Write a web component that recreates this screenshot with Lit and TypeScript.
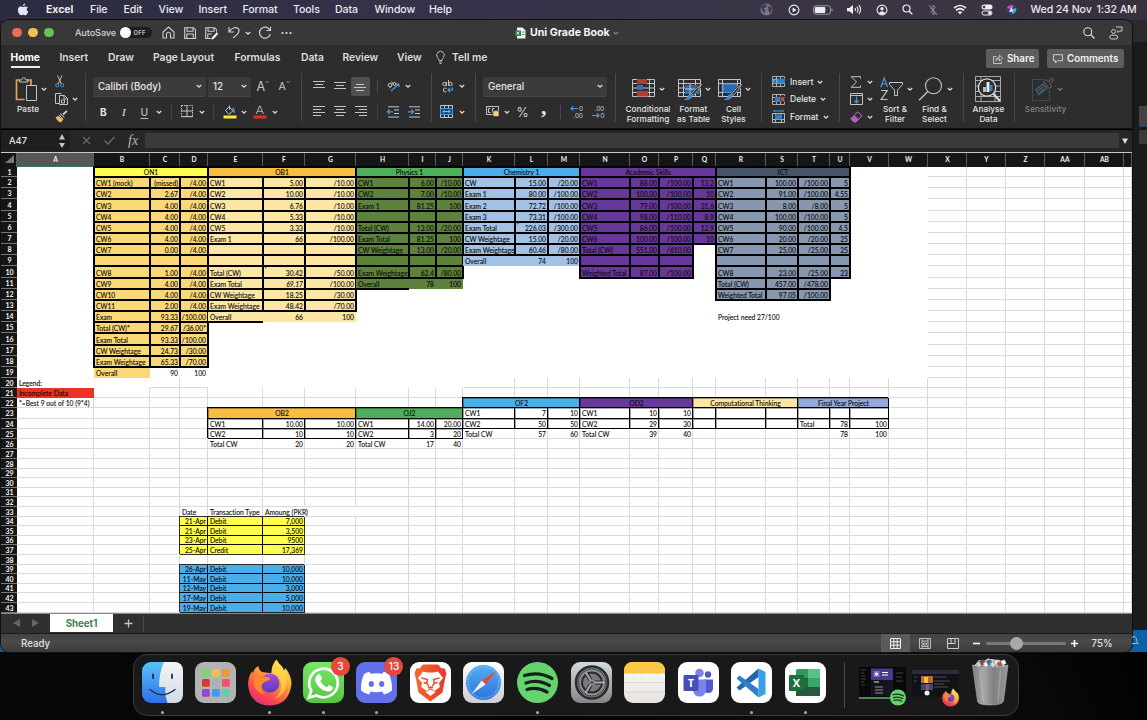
import { LitElement, html, svg, css, nothing } from "lit";
import { customElement } from "lit/decorators.js";

type Slot = [number, unknown];

const ic = (w: number, h: number, body: unknown) =>
  html`<svg class="ic" width=${w} height=${h} viewBox="0 0 ${w} ${h}" fill="none" stroke="#c4c4c4" stroke-width="1">${body}</svg>`;

/** Lays items out left to right; each slot reaches to the start of the next one. */
const strip = (origin: number, items: Slot[], cls = "") => html`<div class="strip ${cls}">
  <span class="slot" style="width:${items[0][0] - origin}px"></span>
  ${items.map(([x, t], i) =>
    i < items.length - 1
      ? html`<span class="slot" style="width:${items[i + 1][0] - x}px">${t}</span>`
      : html`<span class="slot">${t}</span>`)}
</div>`;

const chev = ic(6, 6, svg`<path d="M.8 2 3 4.2 5.2 2" stroke="#d8d8d8" stroke-width="1.3"/>`);
const vsep = html`<i class="vsep"></i>`;

const shared = css`
  * { box-sizing: border-box; }
  .strip { display: flex; align-items: center; flex: none; }
  .slot { flex: none; display: flex; align-items: center; white-space: nowrap; }
  .ic { display: block; flex: none; overflow: visible; }
  .vsep { width: 1px; height: 14px; background: #4a4a4a; }
`;

/* ---------- Menu bar ---------- */
@customElement("menu-bar")
export class MenuBar extends LitElement {
  static styles = [shared, css`
    :host { display: block; height: 20px; background: linear-gradient(90deg, #2b2c40, #36324a 40%, #3b3545 75%, #37303e); color: #e9e9ee; font: 500 10.6px Inter, sans-serif; letter-spacing: -.09px; }
    .strip { height: 19px; }
    b { font-weight: 700; }
  `];
  render() {
    const apple = ic(12, 13, svg`<path stroke="none" fill="#e6e6ec" d="M8.2.4C8.3 1.7 7.2 3 5.9 3 5.8 1.7 7 .5 8.2.4zM10.9 4.5C9.200 5.500 9.400 7.900 11.200 8.700 10.700 10.200 9.600 12.200 8.400 12.200 7.500 12.200 7.200 11.700 6.200 11.700 5.200 11.700 4.800 12.200 4 12.200 2.700 12.200.900 9.400.900 7 .900 4.800 2.300 3.500 3.800 3.500 4.800 3.500 5.500 4.100 6.200 4.100 6.900 4.100 7.700 3.400 8.800 3.400 9.600 3.400 10.400 3.800 10.900 4.500z"/>`);
    const globe = ic(13, 13, svg`<circle cx="6.500" cy="6.500" r="6" fill="#77758a" stroke="none"/><path d="M3 1.800 7 1.500 6 4.500 3.500 5 5.500 7.500 4.500 10 2 7 1 4zM8 3.500l3 0 1 3-2 4-1.500-3z" fill="#3d3a4c" stroke="none"/>`);
    const play = ic(12, 12, svg`<circle cx="6" cy="6" r="4.900" stroke="#eee" stroke-width="1.100"/><path d="M4.600 3.600v4.800L8.500 6z" fill="#eee" stroke="none"/>`);
    const batt = ic(20, 10, svg`<rect x=".500" y=".800" width="17" height="8.400" rx="2.300" stroke="#9a98a6"/><rect x="1.800" y="2" width="10.500" height="6" rx="1" fill="#eee" stroke="none"/><path d="M19 3.700v2.600" stroke="#9a98a6"/>`);
    const vol = ic(15, 11, svg`<path d="M0 4h2.300L6 1v9L2.300 7.300H0z" fill="#eee" stroke="none"/><path d="M8 4q1 1.500 0 3M10 2.700q2 2.800 0 5.800M12 1.200q3.200 4.300 0 8.700" stroke="#eee" stroke-width="1.100"/>`);
    const user = ic(12, 12, svg`<circle cx="6" cy="6" r="4.900" stroke="#eee" stroke-width="1.100"/><circle cx="6" cy="4.800" r="1.700" fill="#eee" stroke="none"/><path d="M2.800 9q3.200-3.400 6.400 0Q6 11.500 2.800 9z" fill="#eee" stroke="none"/>`);
    const find = ic(11, 11, svg`<circle cx="4.500" cy="4.500" r="3.500" stroke="#eee" stroke-width="1.200"/><path d="M7.200 7.200 10.300 10.300" stroke="#eee" stroke-width="1.400"/>`);
    const bt = ic(10, 12, svg`<path d="M2 3.500 7.500 8.500 5 11V1L7.500 3.500 2 8.500" stroke="#8d8999"/><path d="M1 1l8 10" stroke="#8d8999"/>`);
    const wifi = ic(14, 11, svg`<path d="M1 4.200q6-5.400 12 0M3 6.400q4-3.600 8 0" stroke="#eee" stroke-width="1.600"/><path d="M4.800 8q2.200-1.600 4.400 0L7 10.400z" fill="#eee" stroke="none"/>`);
    const cc = ic(12, 12, svg`<rect x=".500" y=".500" width="11" height="5" rx="2.500" fill="#eee" stroke="none"/><rect x="1" y="7" width="10" height="4" rx="2" stroke="#eee"/><circle cx="3" cy="3" r="1.300" fill="#3b3545" stroke="none"/><circle cx="8.700" cy="9" r="1.700" fill="#eee" stroke="none"/>`);
    const siri = ic(11, 11, svg`<circle cx="5.500" cy="5.500" r="5.200" fill="#33406e" stroke="none"/><path d="M.800 4Q3-.500 8 1.500L5.500 5.500z" fill="#c24fb0" stroke="none"/><path d="M5 5.500 10.300 4q0 5-4 6z" fill="#3fb6c9" stroke="none"/><path d="M3 8 5.500 3l1.500 4.500z" fill="#e8ecff" stroke="none"/>`);
    return strip(0, [[16.5, apple], [46, html`<b>Excel</b>`], [90, "File"], [123.5, "Edit"], [158.5, "View"], [198.5, "Insert"], [242.5, "Format"], [293, "Tools"], [335, "Data"], [374.5, "Window"], [429, "Help"],
      [760, globe], [787.5, play], [813, batt], [847, vol], [875.5, user], [901.5, find], [927.5, bt], [953, wifi], [981, cc], [1006, siri], [1030.5, "Wed 24 Nov"], [1096.5, "1:32 AM"]]);
  }
}

/* ---------- Title bar, tabs, ribbon, formula bar ---------- */
@customElement("excel-ribbon")
export class ExcelRibbon extends LitElement {
  static styles = [shared, css`
    :host { display: block; color: #e6e6e6; font: 500 10.3px Inter, sans-serif; }
    .title { height: 25px; background: #383838; }
    .light { width: 9.500px; height: 9.500px; border-radius: 50%; }
    .red { background: #ec6a5e; } .amber { background: #f5bf4f; } .green { background: #61c554; }
    .auto { font-size: 9.100px; letter-spacing: -.08px; color: #d6d6d6; }
    .toggle { display: flex; align-items: center; gap: 2.500px; width: 32px; height: 11px; border-radius: 6px; background: #1d1d1d; color: #bdbdbd; font-size: 5.800px; font-weight: 700; letter-spacing: .3px; }
    .toggle i { width: 11px; height: 11px; border-radius: 50%; background: #fff; }
    .doc { font-weight: 700; font-size: 10.600px; color: #f4f4f4; }
    .tabs { height: 26px; background: #2d2d2d; }
    .tabs .slot { height: 24px; }
    .tab { font-weight: 600; letter-spacing: -.02px; color: #dcdcdc; }
    .home { font-weight: 700; color: #fff; padding: 0 0 3px; border-bottom: 2px solid #eee; margin-top: 5px; letter-spacing: -.05px; }
    .btn { display: flex; align-items: center; gap: 4px; height: 19px; border-radius: 2px; background: #5d5d5d; padding: 0 5px 0 7px; font-weight: 600; font-size: 9.800px; color: #f2f2f2; margin-top: 3px; }
    .share { width: 53px; } .comments { width: 77px; gap: 4px; padding-left: 6px; }
    .ribbon { display: flex; height: 58px; background: #2d2d2d; padding-top: 2px; border-bottom: 1px solid #111; }
    .group { flex: none; height: 49px; border-right: 1px solid #484848; display: flex; }
    .g1 { width: 85px; } .g2 { width: 216px; } .g3 { width: 129.500px; } .g4 { width: 44.500px; } .g5 { width: 140px; }
    .g6 { width: 146px; } .g7 { width: 78px; } .g8 { width: 124px; } .g9 { width: 51px; } .g10 { border: 0; width: 100px; }
    .stack { display: flex; flex-direction: column; }
    .two .strip:first-child { height: 26px; }
    .two .strip:last-child { height: 25px; }
    .three .strip { height: 17.600px; }
    .box { display: flex; justify-content: space-between; align-items: center; height: 19px; background: #3b3b3b; border-radius: 2px; padding: 0 4px 0 5px; font-size: 9.700px; box-shadow: 0 1px 0 #474747; }
    .w113 { width: 113px; } .w43 { width: 43px; } .w124 { width: 124px; }
    .bold { font-weight: 700; font-size: 10px; } .ital { font: italic 11px "Liberation Serif", serif; } .und { text-decoration: underline; text-underline-offset: 2px; color: #bbb; }
    .grow { font-weight: 400; font-size: 12.500px; color: #c8c8c8; } .shrink { font-weight: 400; font-size: 10.500px; color: #c8c8c8; }
    .pct { font-weight: 300; font-size: 13px; } .comma { font: 700 22px/10px "Liberation Serif", serif; height: 19px; }
    .on { display: flex; align-items: center; justify-content: center; width: 19px; height: 19px; background: #505050; border-radius: 2px; }
    .tool { display: flex; flex-direction: column; flex: none; }
    .tool .strip { height: 32px; }
    .lbl { text-align: center; font-size: 8.200px; line-height: 9.800px; font-weight: 500; color: #e4e4e4; letter-spacing: .05px; white-space: nowrap; }
    .l1 { width: 54px; } .c1 { width: 55px; padding-left: 5px; } .lc { width: 54px; }
    .t2 { width: 45px; } .t3 { width: 35px; } .st { width: 44px; } .t8 { width: 35px; }
    .a9 { width: 49px; } .s10 { width: 61px; }
    .small { font-size: 8.500px; margin-right: 4px; }
    .dim { color: #848484; } .dimall { opacity: .45; }
    .fb { display: flex; align-items: center; height: 22px; background: #262626; border-top: 1px solid #000; font-size: 9.300px; }
    .name { width: 69px; height: 21px; background: #1f1f1f; display: flex; align-items: center; justify-content: space-between; padding: 0 5px 0 8px; }
    .fx { font: italic 14px "Liberation Serif", serif; color: #b5b5b5; }
    .input { width: 974px; height: 15px; background: #3a3a3a; }
  `];

  lines(ws: number[], y = 0) {
    return ic(13, 13, svg`${ws.map((w, i) => svg`<path d="M${(12 - w) / 2} ${y + i * 3 + 1.5}h${w}"/>`)}`);
  }
  side(ws: number[], right: boolean) {
    return ic(13, 13, svg`${ws.map((w, i) => svg`<path d="M${right ? 12 - w : 0} ${i * 3 + 1.5}h${w}"/>`)}`);
  }
  tableIcon(kind: string) {
    const base = svg`<path d="M.500 1.500h22v17h-22zM.500 5.500h22M.500 10h22M.500 14.500h22M5.500 1v18M17.500 1v18"/>`;
    if (kind === "cond") return ic(24, 22, svg`${base}<path d="M5 1h10v5.500H5zM5 13h11v5.500H5z" fill="#b43a38" stroke="none"/><path d="M5 7h6v5.500H5z" fill="#2f72b8" stroke="none"/><path d="M5 6.500h10M5 12.500h11" stroke="#2d2d2d"/>`);
    const fill = kind === "table" ? svg`<path d="M7 7h15v9H7z" fill="#2769b5" stroke="none"/><path d="M12 6v12M7 11h15"/>` : svg`<path d="M5 6h14v8.500H5z" fill="#2769b5" stroke="#4b91d5"/>`;
    return ic(24, 22, svg`${kind === "table" ? base : svg`<path d="M.500 1.500h22v17h-22zM.500 5.500h22M.500 14.500h22M4.500 1v18M19.500 1v18"/>`}${fill}<path d="M23 7 14 17" stroke="#2d2d2d" stroke-width="3.500"/><path d="M23.500 6.500Q18 10 13.500 16l1.800 1.500Q21 12 23.500 6.500z" fill="#2d2d2d" stroke="#ccc" stroke-width=".800"/><path d="M14.500 16.500q-3-1.500-4.500 1.500-.500 3-3.500 3.500 6.500 1.500 8-5z" fill="#3a86d2" stroke="#5aa0e4" stroke-width=".500"/>`);
  }
  cellIcon(kind: string) {
    const g = svg`<path d="M.500 1.500h12v10h-12zM.500 4.500h12M.500 8.500h12M4.500 1v11M8.500 1v11" stroke="#b8b8b8" stroke-width=".900"/>`;
    if (kind === "ins") return ic(13, 13, svg`${g}<path d="M5 3.500h8v5H5z" fill="#2f7dcc" stroke="none"/><path d="M7 6H1M3.500 3.500 1 6l2.500 2.500" stroke="#459ae8" stroke-width="1.200"/>`);
    if (kind === "del") return ic(13, 13, svg`${g}<path d="M3 4h5v5H3z" fill="#2f7dcc" stroke="none"/><path d="M8 3h5v6H8z" fill="#2d2d2d" stroke="none"/><path d="M8.500 4l4 4.500M12.500 4l-4 4.500" stroke="#e05656" stroke-width="1.200"/>`);
    return ic(13, 13, svg`<path d="M.500 3.500h12v9h-12zM.500 9.500h12M3.500 3v10M9.500 3v10" stroke="#b8b8b8"/><path d="M3 4.500h7v5H3z" fill="#2f7dcc" stroke="none"/><path d="M2 1h9M2 0v2M11 0v2" stroke="#459ae8"/>`);
  }
  render() {
    const o = 1;
    const home = ic(13, 13, svg`<path d="M1 6 6.500 1 12 6v6H8.500V8.300a2 2 0 0 0-4 0V12H1z" stroke="#ccc" stroke-width="1.100"/>`);
    const save = ic(12, 12, svg`<path d="M.700.700h8.800l2 2v8.800H.700zM3 .700v3.500h6V.700M2.800 11.500V7h6.500v4.500" stroke="#ccc" stroke-width="1.100"/>`);
    const savePen = ic(13, 12, svg`<path d="M6 11.500H.700V.700h8.800l2 2v2M3 .700v3.500h6V.700M2.800 11.500V7h4" stroke="#ccc" stroke-width="1.100"/><path d="M12 5 7 10.500l-.800 2 2.300-.500L13 7z" fill="#fff" stroke="none"/>`);
    const undo = ic(12, 13, svg`<path d="M1 1v5h5M1.200 5.800Q4 1.500 8 1.500q3 .500 3 3.500 0 2.500-6 7" stroke="#ccc" stroke-width="1.200"/>`);
    const redo = ic(14, 13, svg`<path d="M11.800 4A5.500 5.500 0 1 0 12.300 8M12.500.800V4.500H8.500" stroke="#ccc" stroke-width="1.200"/>`);
    const dots = ic(12, 4, svg`<g fill="#ddd" stroke="none"><circle cx="1.500" cy="2" r="1.100"/><circle cx="5.500" cy="2" r="1.100"/><circle cx="9.500" cy="2" r="1.100"/></g>`);
    const docIcon = ic(11, 12, svg`<path d="M2 .500h5.500L10.500 3.500V11.500H2z" fill="#f4f4f4" stroke="none"/><path d="M0 3.500h6v5.500H0z" fill="#1f8048" stroke="none"/><path d="M1.800 4.700l2.400 3M4.200 4.700l-2.400 3" stroke="#fff" stroke-width=".800"/><path d="M7 5h2.500M7 7.500h2.500" stroke="#3c9c62"/>`);
    const search = ic(12, 12, svg`<circle cx="4.800" cy="4.800" r="4" stroke="#ddd" stroke-width="1.100"/><path d="M7.800 7.800 11.500 11.500" stroke="#ddd" stroke-width="1.300"/>`);
    const person = ic(14, 14, svg`<circle cx="4.500" cy="5.500" r="2" stroke="#ccc"/><rect x=".700" y="9.200" width="8" height="3.800" rx="1.900" stroke="#ccc"/><path d="M7 1h6v4h-2.500L9 6.500V5H8" stroke="#ccc"/>`);
    const bulb = ic(9, 13, svg`<path d="M3 9.500Q2.800 7.800 1.500 6.500A3.800 3.800 0 1 1 7.500 6.500Q6.200 7.800 6 9.500zM3 11h3M3.500 12.500h2" stroke="#bbb"/>`);
    const shareIc = ic(10, 10, svg`<path d="M3.500 2.500H.500v7h8V7.500M2.800 6.500Q3 3.500 6.500 3.300V1.200L9.700 4.200 6.500 7V5Q4 5 2.800 6.500z" stroke="#ccc" stroke-width=".900"/>`);
    const bubble = ic(10, 10, svg`<path d="M.500.700h9v6h-5L2.500 9V6.700h-2z" stroke="#ccc"/>`);
    const paste = ic(23, 25, svg`<path d="M5 3H1.500v19.500h8" stroke="#e9a14a" stroke-width="1.700"/><path d="M12 3h4v5" stroke="#e9a14a" stroke-width="1.700"/><path d="M4.500 5V3h2.200q.300-2.300 2-2.300T10.800 3H13v2z" stroke="#c4c4c4"/><path d="M11.500 8.500h10v15h-10z" fill="#2d2d2d" stroke="#c4c4c4"/>`);
    const cut = ic(10, 13, svg`<path d="M2.500.500 6.500 9M7 .500 3 9" stroke="#c4c4c4"/><circle cx="2.300" cy="10.300" r="1.600" stroke="#4a9ae0"/><circle cx="7.200" cy="10.300" r="1.600" stroke="#4a9ae0"/>`);
    const copy = ic(13, 12, svg`<path d="M4 10.500H.500v-10h6" /><path d="M4.500 2.500h5l3 3v6h-8zM9 2.500v3.500h3.500M6.500 7h3v3h-3z"/>`);
    const brush = ic(13, 13, svg`<path d="M12 .800 8 4.500" stroke="#ccc" stroke-width="1.800"/><path d="M5 3.500l4.500 4M3.800 5l4.500 4" stroke="#ccc"/><path d="M3 5.800Q2 7 .500 7.500 3 12 6 12.500 7 11.500 8 9.500z" fill="#efb661" stroke="none"/>`);
    const borders = ic(13, 13, svg`<path d="M.500.500h11v11H.500z" stroke-dasharray="1.500 1"/><path d="M6 0v12M0 6h12M0 11.700h12"/>`);
    const fillIc = ic(14, 14, svg`<path d="M2.500 5.500 6 1.800l4 4-4 3.500zM6.500.500v4" /><path d="M9.500 3q2.500 2 1.500 5" stroke="#4a9ae0" stroke-width="1.400"/><path d="M.500 10.500h13v3H.500z" fill="#f7ee3a" stroke="none"/>`);
    const fontC = ic(14, 14, svg`<path d="M3.200 9 6.500 1h.600L10.400 9M4.500 6.300h4.600" stroke="#b8b8b8"/><path d="M.500 10.500h13v3H.500z" fill="#e0301f" stroke="none"/>`);
    const orient = ic(14, 13, svg`<path d="M4 11 12 4M12 4H9M12 4v3" stroke="#4a9ae0" stroke-width="1.200"/><circle cx="3" cy="5" r="1.800"/><path d="M4.500 6.500 2.500 8M7 5.200 4.500 1.500"/><circle cx="7.500" cy="4" r="1.500"/>`);
    const indent = (right: boolean) => ic(13, 12, svg`<path d="M1 .800h11M7 4h5M7 7.500h5M1 11h11"/><path d=${right ? "M0 5.800h5.500M3.300 3.500l2.200 2.300-2.200 2.300" : "M6 5.800H.500M2.800 3.500.500 5.800l2.300 2.300"} stroke="#4a9ae0" stroke-width="1.200"/>`);
    const wrap = ic(12, 13, svg`<circle cx="2.500" cy="4" r="1.700"/><path d="M4.500 2v4M6.500 0v6M4.500 8.500Q1.500 7 1.500 10t3 1.500"/><circle cx="8.500" cy="4" r="1.700"/><path d="M10.500 7.500v2.500H6M8 8l-2 2 2 2" stroke="#4a9ae0" stroke-width="1.200"/>`);
    const merge = ic(13, 13, svg`<path d="M.500.500h12v12H.500zM4.500.500v3M8.500.500v3M4.500 9.500v3M8.500 9.500v3"/><path d="M.500 3.500h12v6H.500z" fill="#1e4a76" stroke="#4a9ae0"/><path d="M3 6.500h7M4.500 5 3 6.500 4.500 8M8.500 5 10 6.500 8.500 8" stroke="#8cc4f5" stroke-width=".900"/>`);
    const money = ic(14, 13, svg`<path d="M.500 1.500h12v8H.500zM4.500 3.500h-2v4h2M8.500 3.500H6.500v4h2"/><path d="M7 6q3-1.500 6 0v5q-3 1.500-6 0z" fill="#e9bd5c" stroke="#2d2d2d" stroke-width=".600"/><path d="M7.500 8h5M7.500 10h5" stroke="#fff3cf" stroke-width=".700"/>`);
    const dec = (down: boolean) => html`<svg class="ic" width="14" height="14" viewBox="0 0 14 14" fill="#c8c8c8" font-family="Liberation Sans, sans-serif" font-size="7"><text x=${down ? 3.5 : 9} y="6">${down ? ".00" : "0"}</text><text x=${down ? 9.5 : 3} y="13">${down ? "0" : ".00"}</text><path d=${down ? "M1 10.500h7M5.800 8.300 8 10.500l-2.200 2.200" : "M8 3.500H1M3.200 1.300 1 3.500l2.200 2.200"} fill="none" stroke="#4a9ae0" stroke-width="1.200"/></svg>`;
    const sum = ic(12, 12, svg`<path d="M10.500 2.500V.700H1.200L6.500 6 1.200 11.300h9.300V9.500" />`);
    const fillDown = ic(13, 12, svg`<path d="M.500.500h12v11H.500zM.500 2.500h12"/><path d="M6.500 3.500v6M4 7.300l2.500 2.500L9 7.300" stroke="#4a9ae0" stroke-width="1.200"/>`);
    const erase = ic(13, 12, svg`<path d="M7.500.800 12 4.500 6 11H4L.800 8z" stroke="#c46bd0"/><path d="M4.300 4.300.800 8 4 11l1.800.200 3-3.300z" fill="#b45cc4" stroke="none"/>`);
    const sort = ic(23, 24, svg`<path d="M.800 10.300 4.200.900l3.400 9.400M2 7h4.500" stroke="#4a9ae0" stroke-width="1.200"/><path d="M1.200 13.500h6L1.200 22.500h6.300" stroke-width="1.200"/><path d="M9.500 5.500h13v2L17.500 13v5.500h-3V13L9.500 7.500z"/>`);
    const magn = ic(25, 24, svg`<circle cx="15.500" cy="8.800" r="8" stroke-width="1.100"/><path d="M9.800 14.500 1 23.300" stroke-width="1.300"/>`);
    const analyse = ic(26, 26, svg`<path d="M.500.500h25v25H.500zM.500 4.500h25M.500 10h25M.500 15.500h25M.500 20.500h25M6 .500v25M20 15v10" stroke="#a8a8a8"/><circle cx="12" cy="11.500" r="8.700" fill="#2d2d2d" stroke="#ddd" stroke-width="1.300"/><path d="M8 11h3v5H8z" fill="#bbb" stroke="none"/><path d="M11.500 6h3v10h-3z" fill="#e8e8e8" stroke="none"/><path d="M15 9h2.500v6H15z" fill="#2f7dcc" stroke="none"/><path d="M18.300 17.800 25 25" stroke="#ddd" stroke-width="2"/>`);
    const sens = ic(24, 26, svg`<path d="M12 3.500H1.500v21h17V14" stroke="#3d78a8" stroke-width="1.200"/><path d="M5 13.500 12 8l3.500 4.500L8 18.500zM7.500 14.500 12 11M9 16.500l4-3.500" stroke="#5f9cd0" stroke-width="1.500"/><path d="M12.500 5.500l2-2 3 2.500L20.500 1.500 22.500 4 19 8l1.500 3-2.500 1.500z" stroke="#aaa"/>`);
    return html`
      <div class="title strip">${strip(o, [[12, html`<i class="light red"></i>`], [28, html`<i class="light amber"></i>`], [44, html`<i class="light green"></i>`], [75, html`<span class="auto">AutoSave</span>`], [120, html`<span class="toggle"><i></i>OFF</span>`],
        [161.5, home], [183.500, save], [205, savePen], [227.500, undo], [245, chev], [258, redo], [281, dots], [515, docIcon], [530, html`<span class="doc">Uni Grade Book</span>`], [612.500, html`<span class="dimall">${chev}</span>`], [1083, search], [1109, person]])}</div>
      <div class="tabs">${strip(o, [[10.500, html`<span class="home">Home</span>`], [59.500, html`<span class="tab">Insert</span>`], [108, html`<span class="tab">Draw</span>`], [153, html`<span class="tab">Page Layout</span>`], [234.500, html`<span class="tab">Formulas</span>`], [301, html`<span class="tab">Data</span>`], [342.500, html`<span class="tab">Review</span>`], [397, html`<span class="tab">View</span>`], [436, bulb], [452, html`<span class="tab">Tell me</span>`],
        [986, html`<span class="btn share">${shareIc}Share</span>`], [1047, html`<span class="btn comments">${bubble}Comments</span>`]])}</div>
      <div class="ribbon">
        <div class="group g1">
          <div class="tool l1">${strip(o, [[15, paste], [40.500, chev]])}<div class="lbl">Paste</div></div>
          <div class="stack three">${strip(55, [[54, cut]])}${strip(55, [[52, copy], [69, chev]])}${strip(55, [[52.500, brush]])}</div>
        </div>
        <div class="group g2"><div class="stack two">
          ${strip(86, [[93, html`<span class="box w113">Calibri (Body)${chev}</span>`], [208, html`<span class="box w43">12${chev}</span>`], [256.500, html`<span class="grow">A</span>`], [265, ic(5, 12, svg`<path d="M.500 3 2.300 1 4 3" stroke="#4a9ae0"/>`)], [278.500, html`<span class="shrink">A</span>`], [285.500, ic(5, 12, svg`<path d="M.500 1 2.300 3 4 1" stroke="#4a9ae0"/>`)]])}
          ${strip(86, [[100, html`<span class="bold">B</span>`], [122, html`<span class="ital">I</span>`], [140.500, html`<span class="und">U</span>`], [156, chev], [171, vsep], [180.500, borders], [198.500, chev], [213, vsep], [222.500, fillIc], [241, chev], [253, fontC], [271.500, chev]])}
        </div></div>
        <div class="group g3"><div class="stack two">
          ${strip(302, [[313, this.lines([12, 8, 12])], [334, this.lines([12, 8, 12], 1)], [351, html`<span class="on">${this.lines([8, 12, 8], 3)}</span>`], [377, vsep], [387, orient], [405, chev]])}
          ${strip(302, [[313, this.side([12, 8, 12, 8], false)], [334, this.lines([12, 8, 12, 8])], [355, this.side([12, 8, 12, 8], true)], [377, vsep], [387, indent(false)], [408, indent(true)]])}
        </div></div>
        <div class="group g4"><div class="stack two">
          ${strip(431.5, [[442, wrap], [458.500, chev]])}
          ${strip(431.5, [[440, merge], [458.500, chev]])}
        </div></div>
        <div class="group g5"><div class="stack two">
          ${strip(476, [[483, html`<span class="box w124">General${chev}</span>`]])}
          ${strip(476, [[486, money], [504, chev], [516.500, html`<span class="pct">%</span>`], [541, html`<span class="comma">,</span>`], [560, vsep], [570, dec(false)], [591, dec(true)]])}
        </div></div>
        <div class="group g6">
          <div class="tool c1">${strip(621, [[632, this.tableIcon("cond")], [659, chev]])}<div class="lbl lc">Conditional<br>Formatting</div></div>
          <div class="tool t2">${strip(671, [[678, this.tableIcon("table")], [705, chev]])}<div class="lbl">Format<br>as Table</div></div>
          <div class="tool t3">${strip(716, [[718, this.tableIcon("cell")], [745, chev]])}<div class="lbl">Cell<br>Styles</div></div>
        </div>
        <div class="group g7"><div class="stack three">
          ${strip(762, [[772, this.cellIcon("ins")], [790, html`<span class="small">Insert</span>${chev}`]])}
          ${strip(762, [[772, this.cellIcon("del")], [790, html`<span class="small">Delete</span>${chev}`]])}
          ${strip(762, [[772, this.cellIcon("fmt")], [790, html`<span class="small">Format</span>${chev}`]])}
        </div></div>
        <div class="group g8">
          <div class="stack three">${strip(840, [[850, sum], [867, chev]])}${strip(840, [[850, fillDown], [867, chev]])}${strip(840, [[850, erase], [867, chev]])}</div>
          <div class="tool st">${strip(873, [[880, sort], [907, chev]])}<div class="lbl">Sort &amp;<br>Filter</div></div>
          <div class="tool t8">${strip(917, [[918, magn], [947, chev]])}<div class="lbl">Find &amp;<br>Select</div></div>
        </div>
        <div class="group g9"><div class="tool a9">${strip(964, [[975, analyse]])}<div class="lbl">Analyse<br>Data</div></div></div>
        <div class="group g10"><div class="tool s10"><span class="dimall">${strip(1015, [[1031, sens], [1057, chev]])}</span><div class="lbl dim">Sensitivity</div></div></div>
      </div>
      <div class="fb"><span class="name">A47${ic(6, 14, svg`<path d="M0 5.500 3 0l3 5.500zM0 9h6l-3 5z" fill="#c4c4c4" stroke="none"/>`)}</span>
        ${strip(70, [[81.500, ic(9, 9, svg`<path d="M1 1l7 7M8 1 1 8" stroke="#666" stroke-width="1.300"/>`)], [104, ic(11, 9, svg`<path d="M.500 4.500 4 8 10.500 1" stroke="#666" stroke-width="1.500"/>`)], [128, html`<span class="fx">fx</span>`], [145, html`<span class="input"></span>`], [1122, ic(6, 6, svg`<path d="M0 .500h6L3 6z" fill="#ddd" stroke="none"/>`)]])}
      </div>`;
  }
}

/* ---------- Worksheet ---------- */
const COLS = ["A","B","C","D","E","F","G","H","I","J","K","L","M","N","O","P","Q","R","S","T","U","V","W","X","Y","Z","AA","AB",""];
const COL_X = [1,17,94,150,180,208,263,305,356,409,436,463,515,548,580,630,659,693,716,766,798,830,850,889,928,967,1006,1045,1085,1124,1132];
const ROW_Y = [153, 167, ...Array.from({ length: 19 }, (_, i) => Math.round(177 + i * 11.17)), 388, 398, 408, 419, 429, 439,
  ...Array.from({ length: 18 }, (_, i) => Math.round(449.3 + i * 9.6))];
const tracks = (e: number[]) => e.slice(1).map((v, i) => `${v - e[i]}px`).join(" ");

interface Block { c: string; r: number; span: number; title?: string; head?: string; fill?: string; edge: string; rows: string[][]; tail?: string[]; tailFill?: number; }
const BLOCKS: Block[] = [
  { c: "B", r: 1, span: 3, title: "ON1", head: "#fffd50", fill: "#fbd876", edge: "thick", tailFill: 1, tail: ["Overall", "90", "100"],
    rows: [["CW1 (mock)","(missed)","/4.00"],["CW2","2.67","/4.00"],["CW3","4.00","/4.00"],["CW4","4.00","/4.00"],["CW5","4.00","/4.00"],["CW6","4.00","/4.00"],["CW7","0.00","/4.00"],["","",""],["CW8","1.00","/4.00"],["CW9","4.00","/4.00"],["CW10","4.00","/4.00"],["CW11","2.00","/4.00"],["Exam","93.33","/100.00"],["Total (CW)*","29.67","/36.00*"],["Exam Total","93.33","/100.00"],["CW Weightage","24.73","/30.00"],["Exam Weightage","65.33","/70.00"]] },
  { c: "E", r: 1, span: 3, title: "OB1", head: "#f6bd40", fill: "#fde5a3", edge: "thick", tailFill: 3, tail: ["Overall", "66", "100"],
    rows: [["CW1","5.00","/10.00"],["CW2","10.00","/10.00"],["CW3","6.76","/10.00"],["CW4","5.33","/10.00"],["CW5","3.33","/10.00"],["Exam 1","66","/100.00"],["","",""],["","",""],["Total (CW)","30.42","/50.00"],["Exam Total","69.17","/100.00"],["CW Weightage","18.25","/30.00"],["Exam Weightage","48.42","/70.00"]] },
  { c: "H", r: 1, span: 3, title: "Physics 1", head: "#4eae5b", fill: "#5d823c", edge: "thick", tailFill: 3, tail: ["Overall", "78", "100"],
    rows: [["CW1","6.00","/10.00"],["CW2","7.00","/10.00"],["Exam 1","81.25","100"],["","",""],["Total (CW)","13.00","/20.00"],["Exam Total","81.25","100"],["CW Weightage","13.00","/20.00"],["","",""],["Exam Weightage","62.4","/80.00"]] },
  { c: "K", r: 1, span: 3, title: "Chemistry 1", head: "#4baeea", fill: "#a3c1e5", edge: "thick", tailFill: 3, tail: ["Overall", "74", "100"],
    rows: [["CW","15.00","/20.00"],["Exam 1","80.00","/100.00"],["Exam 2","72.72","/100.00"],["Exam 3","73.31","/100.00"],["Exam Total","226.03","/300.00"],["CW Weightage","15.00","/20.00"],["Exam Weightage","60.46","/80.00"]] },
  { c: "N", r: 1, span: 4, title: "Academic Skills", head: "#68379a", fill: "#68379a", edge: "thick",
    rows: [["CW1","88.00","/100.00","13.2"],["CW2","100.00","/100.00","10"],["CW3","79.00","/100.00","31.6"],["CW4","98.00","/110.00","8.9"],["CW5","86.00","/100.00","12.9"],["CW6","100.00","/100.00","10"],["Total (CW)","551.00","/610.00"],["","",""],["Weighted Total","87.00","/100.00"]] },
  { c: "R", r: 1, span: 4, title: "ICT", head: "#475468", fill: "#8797af", edge: "thick",
    rows: [["CW1","100.00","/100.00","5"],["CW2","91.00","/100.00","4.55"],["CW3","8.00","/8.00","5"],["CW4","100.00","/100.00","5"],["CW5","90.00","/100.00","4.5"],["CW6","20.00","/20.00","25"],["CW7","25.00","/25.00","25"],["","","",""],["CW8","23.00","/25.00","23"],["Total (CW)","457.00","/478.00"],["Weighted Total","97.05","/100.00"]] },
  { c: "E", r: 23, span: 3, title: "OB2", head: "#f6bd40", fill: "#fff", edge: "medium", rows: [["CW1","10.00","10.00"],["CW2","10","10"]], tail: ["Total CW","20","20"] },
  { c: "H", r: 23, span: 3, title: "OJ2", head: "#4eae5b", fill: "#fff", edge: "medium", rows: [["CW1","14.00","20.00"],["CW2","3","20"]], tail: ["Total CW","17","40"] },
  { c: "K", r: 22, span: 3, title: "OF2", head: "#4baeea", fill: "#fff", edge: "medium", rows: [["CW1","7","10"],["CW2","50","50"]], tail: ["Total CW","57","60"] },
  { c: "N", r: 22, span: 3, title: "OD2", head: "#68379a", fill: "#fff", edge: "medium", rows: [["CW1","10","10"],["CW2","29","30"]], tail: ["Total CW","39","40"] },
  { c: "Q", r: 22, span: 3, title: "Computational Thinking", head: "#fde5a3", fill: "#fff", edge: "medium", rows: [["","",""],["","",""]] },
  { c: "T", r: 22, span: 3, title: "Final Year Project", head: "#92a9d9", fill: "#fff", edge: "medium", rows: [["","",""],["Total","78","100"]], tail: ["","78","100"] },
  { c: "D", r: 33, span: 3, fill: "#fffd50", edge: "thin", rows: [["21-Apr","Debit","7,000"],["21-Apr","Debit","3,500"],["23-Apr","Debit","9500"],["25-Apr","Credit","17,369"]] },
  { c: "D", r: 38, span: 3, fill: "#4baeea", edge: "thin", rows: [["26-Apr","Debit","10,000"],["11-May","Debit","10,000"],["12-May","Debit","3,000"],["17-May","Debit","5,000"],["19-May","Debit","10,000"]] },
];

@customElement("work-sheet")
export class WorkSheet extends LitElement {
  static styles = css`
    * { box-sizing: border-box; }
    :host { display: block; background: #fff; color: #0c0c0c; font: 400 6.700px/8px Lato, sans-serif; }
    .grid { display: grid; height: 460px; overflow: hidden; }
    .hd { background: #161616; color: #f2f2f2; font-weight: 700; font-size: 6.700px; display: flex; align-items: center; justify-content: center; border-right: 1px solid #5c5c5c; padding: 0 0 2px 1px; }
    .rh { border-right: 0; border-bottom: 1px solid #777; padding: 0 0 0 1px; font-size: 7px; }
    .sel { background: #565656; border-bottom: 1px solid #2f7a4d; padding: 0 0 1px 1px; }
    .vl { border-right: 1px solid #dadada; }
    .hl { border-bottom: 1px solid #dadada; }
    .white { background: #fff; }
    .kr { margin-bottom: 1px; }
    .cell { display: flex; align-items: center; white-space: nowrap; padding: 0 2px 1px; min-width: 0; letter-spacing: .02px; -webkit-text-stroke: .1px #0c0c0c; }
    .low { padding: 1px 2px 0; }
    .right { justify-content: flex-end; }
    .mid { justify-content: center; }
    .thick { outline: 2px solid #000; outline-offset: -1px; }
    .medium { box-shadow: inset -1px -1px #000, -1px -1px #000, inset 1px 1px rgba(0,0,0,.35); }
    .thin { box-shadow: inset -1px -1px rgba(0,0,0,.8), -1px -1px rgba(0,0,0,.8); }
    .italic { font-style: italic; }
    .flag::before { content: ""; align-self: flex-start; margin-right: auto; border: solid transparent; border-width: 0 2.500px 2.500px 0; border-left: 0; border-top: 2.500px solid #1f7a3c; }
    .under { border-bottom: 2px solid #000; margin-bottom: -1px; }
  `;
  at(c: number, r: number, cs = 1, rs = 1) { return `grid-area:${r + 1}/${c + 2}/span ${rs}/span ${cs}`; }
  cell(text: string, c: number, r: number, cls: string, bg?: string, span = 1) {
    const right = /^[\d/(]/.test(text) && span === 1;
    const low = r > 1 && r < 20;
    const flag = text === "30.42" || text === "226.03";
    return html`<div class="cell ${low ? "low" : ""} ${cls} ${right ? "right" : ""} ${flag ? "flag" : ""} ${text === "69.17" ? "italic" : ""}" style="${this.at(c, r, span)}${bg ? `;background:${bg}` : ""}">${text}</div>`;
  }
  block(b: Block) {
    const c0 = COLS.indexOf(b.c);
    const t = b.r + b.rows.length + 1;
    const ul = b.title === "OB1" || b.title === "Physics 1";
    return html`
      ${b.tail ? b.tail.map((v, j) => this.cell(v, c0 + j, t, ul && j === 0 ? "under" : "", j < (b.tailFill ?? 0) ? b.fill : undefined)) : nothing}
      ${b.title ? this.cell(b.title, c0, b.r, `${b.edge} mid`, b.head, b.span) : nothing}
      ${b.rows.map((row, i) => row.map((v, j) => this.cell(v, c0 + j, b.r + 1 + i, b.edge, b.fill)))}`;
  }
  render() {
    return html`<div class="grid" style="grid-template-columns:${tracks(COL_X)};grid-template-rows:${tracks(ROW_Y)}">
      ${COLS.map((_, c) => html`<i class="vl" style=${this.at(c, 1, 1, 43)}></i>`)}
      ${Array.from({ length: 43 }, (_, r) => html`<i class="hl" style=${this.at(0, r + 1, 29)}></i>`)}
      <i class="white" style=${this.at(0, 1, 23, 19)}></i>
      <i class="white" style=${this.at(0, 20, 2)}></i>
      <i class="white kr" style=${this.at(3, 20)}></i>
      <i class="white" style=${this.at(4, 20, 6)}></i>
      <i class="white kr" style=${this.at(5, 33, 2)}></i>
      <div class="hd" style="grid-area:1/1"><svg width="9" height="8"><path d="M9 0v8H0z" fill="#777"/></svg></div>
      ${COLS.map((n, c) => html`<div class="hd ${c === 0 ? "sel" : ""}" style=${this.at(c, 0)}>${n}</div>`)}
      ${Array.from({ length: 43 }, (_, r) => html`<div class="hd rh" style="grid-area:${r + 2}/1">${r + 1}</div>`)}
      ${BLOCKS.map((b) => this.block(b))}
      ${this.cell("Project need 27/100", 17, 14, "")}
      ${this.cell("Legend:", 0, 20, "")}
      ${this.cell("Incomplete Data", 0, 21, "", "#ea3323")}
      ${this.cell("*=Best 9 out of 10 (9*4)", 0, 22, "")}
      ${this.cell("Date", 3, 33, "")}
      ${this.cell("Transaction Type", 4, 33, "")}
      ${this.cell("Amoung (PKR)", 5, 33, "")}
    </div>`;
  }
}

/* ---------- Sheet tabs and status bar ---------- */
@customElement("excel-footer")
export class ExcelFooter extends LitElement {
  static styles = [shared, css`
    :host { display: block; font: 500 9.700px Inter, sans-serif; color: #e0e0e0; }
    .tabs { height: 21px; background: #303030; border-bottom: 1px solid #1c1c1c; border-top: 1px solid #8a8a8a; }
    .tabs > .strip { height: 18px; }
    .sheet { width: 63px; height: 18px; background: #fff; color: #3c8155; font-weight: 700; display: flex; align-items: center; justify-content: center; }
    .status { height: 18px; background: linear-gradient(#424242, #4a4a4a 40%, #3b3b3b); }
    .status > .strip { height: 18px; }
    .view { width: 29px; height: 18px; background: #5b5b5b; display: flex; align-items: center; justify-content: center; }
    .vsep { height: 17px; }
    .slider { width: 80px; height: 3px; border-radius: 2px; background: #777; display: flex; align-items: center; padding-left: 24px; }
    .knob { width: 13px; height: 13px; border-radius: 50%; background: #a9a9a9; flex: none; }
  `];
  render() {
    const tri = (d: string) => ic(7, 8, svg`<path d=${d} fill="#656565" stroke="none"/>`);
    return html`<div class="tabs">${strip(1, [[13, tri("M7 0v8L0 4z")], [32, tri("M0 0v8l7-4z")], [50, html`<span class="sheet">Sheet1</span>`], [124, ic(9, 9, svg`<path d="M4.500.500v8M.500 4.500h8" stroke="#c4c4c4" stroke-width="1.300"/>`)], [143, vsep]])}</div>
      <div class="status">${strip(1, [[21, "Ready"],
        [881, html`<span class="view">${ic(11, 11, svg`<path d="M.500.500h10v10H.500zM3.800 0v11M7.200 0v11M0 3.800h11M0 7.200h11" stroke="#eee"/>`)}</span>`],
        [918.500, ic(12, 11, svg`<path d="M.500.500h11v10H.500zM3 3h6v5.500H3zM4.500 5h3v2h-3zM3 0v3M9 0v3M3 8v3M9 8v3" stroke="#ccc" stroke-width=".900"/>`)],
        [947, ic(12, 11, svg`<path d="M.500.500h11v10H.500zM4 .500v5M8 .500v5M.500 5.500h7.500" stroke="#ccc"/>`)],
        [973, ic(7, 7, svg`<path d="M0 3.500h7" stroke="#fff" stroke-width="1.600"/>`)], [985.500, html`<span class="slider"><i class="knob"></i></span>`], [1070.500, ic(7, 7, svg`<path d="M0 3.500h7M3.500 0v7" stroke="#fff" stroke-width="1.600"/>`)], [1091.500, "75%"]])}</div>`;
  }
}

/* ---------- Dock ---------- */
const flame = svg`<path d="M27.500-2.500Q29 1 32.500 4 34.500 6 35 9L36.500 6Q42.500 14 42.500 22 40 43 21 43.500 1 43-1 23-1 14 3.500 9L4 11.500Q5 6 9.500 4q.300 4 3.500 6 6 1 9.500 1Q22.500 3 27.500-2.500z" fill="url(#ff)" stroke="none"/><path d="M27.500-2.500Q29 1 32.500 4q6 7 5 17-1 12-12 16 8-7 6.500-16-1.500-6-9.500-10Q22.500 3 27.500-2.500z" fill="#ffe14d" opacity=".600" stroke="none"/><circle cx="21" cy="21" r="9.500" fill="url(#fp)" stroke="none"/><path d="M5 16Q9 13 14 14.500l4 .500Q22 15 21 17.500q-5 1.500-8 4.500-2 8 4 10-10 0-12-10z" fill="#fd8a2f" stroke="none"/>`;
const spot = (bars: string) => svg`<circle cx="20.500" cy="20.500" r="20.500" fill="#65d46e" stroke="none"/><path d="M7.500 13.500Q22 9 35 16.500M9 21Q21 17 32.500 23.500M10 27.500Q20 24.500 30 30" stroke=${bars} stroke-width="3.200" stroke-linecap="round"/>`;

@customElement("mac-dock")
export class MacDock extends LitElement {
  static styles = [shared, css`
    :host { display: flex; width: 886px; height: 62px; margin: 2px 0 0 133px; background: #191919; border: 1px solid #3a3a3a; border-radius: 14px; padding-left: 1.500px; }
    .app { position: relative; width: 53.600px; height: 60px; display: flex; flex-direction: column; align-items: center; padding-top: 7px; flex: none; }
    .dot { width: 3px; height: 3px; border-radius: 50%; background: #aaa; margin-top: 8px; }
    .badge { position: absolute; right: 0; top: 2px; width: 19px; height: 19px; border-radius: 50%; background: #e5483d; color: #fff; font: 500 10px/19px Inter, sans-serif; text-align: center; }
    .tray { display: flex; align-items: flex-start; }
    .rule { width: 1px; height: 46px; margin: 7px 14px 0 11.500px; background: #4b4b4b; }
    .trash { margin: 3px 0 0 7px; }
    .thumb { margin-top: 12px; margin-right: 6px; }
  `];
  app(body: unknown, running = false, badge?: string) {
    return html`<div class="app">${ic(41, 41, body)}${running ? html`<i class="dot"></i>` : nothing}${badge ? html`<span class="badge">${badge}</span>` : nothing}</div>`;
  }
  tile(fill: string) { return svg`<rect width="41" height="41" rx="9" fill=${fill} stroke="none"/>`; }
  render() {
    const pads = ["#74d86a", "#f3c13f", "#eb973a", "#d8392e", "#a9b2b7", "#ef5368", "#9a45cf", "#3b9cf0", "#63cfa8"];
    const bits = ["#cfd6db", "#a33b3b", "#f2f2f2", "#3d6fa8", "#dcdcdc", "#e8e8e8", "#b0593a", "#fafafa"];
    return html`
      ${this.app(svg`<defs>
          <linearGradient id="fb" x2="0" y2="1"><stop stop-color="#5ac3fa"/><stop offset="1" stop-color="#2d6fe8"/></linearGradient>
          <linearGradient id="fw" x2="0" y2="1"><stop stop-color="#f4f5f7"/><stop offset="1" stop-color="#d3dae6"/></linearGradient></defs>
        ${this.tile("url(#fb)")}<path d="M22 0H32Q41 0 41 9v23q0 9-9 9H25.500Q23 34 23.300 25H17Q17 11 22 0z" fill="url(#fw)" stroke="none"/>
        <path d="M11 12.500v3.500M30 12.500v3.500" stroke="#1d2c48" stroke-width="1.800" stroke-linecap="round"/><path d="M8 27.500Q20 38 33 27.500" stroke="#1d2c48" stroke-width="1.400" stroke-linecap="round"/>`, true)}
      ${this.app(svg`${this.tile("#b3b3b3")}${pads.map((p, i) => svg`<rect x=${7 + (i % 3) * 10} y=${7 + Math.floor(i / 3) * 10} width="7.800" height="7.800" rx="1.500" fill=${p} stroke="none"/>`)}`)}
      ${this.app(svg`<defs>
          <linearGradient id="ff" x1=".800" x2=".200" y2="1"><stop stop-color="#fff04d"/><stop offset=".400" stop-color="#fda036"/><stop offset=".750" stop-color="#f8464c"/><stop offset="1" stop-color="#df2b80"/></linearGradient>
          <linearGradient id="fp" x2="0" y2="1"><stop stop-color="#b04ad8"/><stop offset="1" stop-color="#5340b8"/></linearGradient></defs>${flame}`, true)}
      ${this.app(svg`<defs><linearGradient id="wa" x2="0" y2="1"><stop stop-color="#77e866"/><stop offset="1" stop-color="#55c640"/></linearGradient></defs>${this.tile("url(#wa)")}
        <path d="M6 35.500 8.300 28.500A14.300 14.300 0 1 1 13.500 33.500z" stroke="#fff" stroke-width="2.700"/><path d="M15 12.500q1.500-1 2.500.500l1.500 3.300q.200 1-1.600 2.700Q19.500 23.500 24 25.200q1.500-2.200 2.300-2.100l3.600 1.800q.500 4.300-4.900 4.600Q20 29 15.500 24.500 9 17 15 12.500z" fill="#fff" stroke="none"/>`, true, "3")}
      ${this.app(svg`${this.tile("#6270ea")}<path d="M13.500 9.800Q10 10.500 8 12 4.500 20 5 28.500q3.500 3 8 4l1.800-3q5.700 1.500 11.400 0l1.800 3q4.500-1 8-4Q36.500 20 33 12q-2-1.500-5.500-2.200l-1 2q-6-1-12 0z" fill="#fff" stroke="none"/><ellipse cx="15.300" cy="22" rx="2.600" ry="3" fill="#6270ea" stroke="none"/><ellipse cx="25.700" cy="22" rx="2.600" ry="3" fill="#6270ea" stroke="none"/>`, true, "13")}
      ${this.app(svg`<defs><linearGradient id="br"><stop stop-color="#f26c2c"/><stop offset="1" stop-color="#e8372c"/></linearGradient></defs>${this.tile("#fff")}
        <path d="M13 2.500h15l3.500 4 3-.200 2 5.200L35 17 32.500 30.500 20.500 39.500 8.500 30.500 6 17 4.500 11.500l2-5.200 3 .200z" fill="url(#br)" stroke="none"/>
        <path d="M13 9.500 17 10.500h7L28 9.500 33 16l-4 5 .800 4-5.300 4-4-3-4 3-5.300-4L12 21 8 16zM15.500 30l5-2.500 5 2.500-5 4z" fill="#fff" stroke="none"/>
        <path d="M11.500 16l6 1.500-.800 3 2 4M29.500 16l-6 1.500.800 3-2 4M18 26l2.500-1 2.500 1M13.500 20.500l3 1M27.500 20.500l-3 1" stroke="#ee4a2c" stroke-width="1.500"/>`)}
      ${this.app(svg`<defs><linearGradient id="sf" x2="0" y2="1"><stop stop-color="#51aef0"/><stop offset="1" stop-color="#2e72e0"/></linearGradient><linearGradient id="sb" x2="0" y2="1"><stop stop-color="#fff"/><stop offset="1" stop-color="#cfcfcf"/></linearGradient></defs>${this.tile("url(#sb)")}
        <circle cx="20.500" cy="20.500" r="17.500" fill="url(#sf)" stroke="none"/><circle cx="20.500" cy="20.500" r="15.500" stroke="#a8d4f8" stroke-width="1.500" stroke-dasharray=".500 1.100"/><path d="M33.500 9 18.800 18.500l3.800 4z" fill="#e8493d" stroke="none"/><path d="M8.500 32 18.800 18.500l3.800 4z" fill="#f3f3f3" stroke="none"/>`)}
      ${this.app(spot("#16201a"), true)}
      ${this.app(svg`<defs><linearGradient id="sg" x2="0" y2="1"><stop stop-color="#cfdbe3"/><stop offset="1" stop-color="#858585"/></linearGradient></defs>${this.tile("url(#sg)")}
        <circle cx="21" cy="20.500" r="16" fill="#909396" stroke="#2b2c2e" stroke-width="2.600"/><circle cx="21" cy="20.500" r="13.500" stroke="#303133" stroke-width="1.600" stroke-dasharray="1 .700"/><circle cx="21" cy="20.500" r="10" fill="#777a7d" stroke="#2b2c2e" stroke-width="2"/><path d="M21 20.500H31M21 20.500 15.500 11.500M21 20.500 15.500 30" stroke="#2b2c2e" stroke-width="4"/><path d="M21 20.500H34M21 20.500 14.500 10M21 20.500 14.500 31" stroke="#a7aaad" stroke-width="2"/><circle cx="21" cy="20.500" r="2.500" fill="#55585a" stroke="#a7aaad"/>`)}
      ${this.app(svg`<defs><linearGradient id="nt" x2="0" y2="1"><stop stop-color="#fbfbfa"/><stop offset="1" stop-color="#e6e3df"/></linearGradient></defs>${this.tile("url(#nt)")}<path d="M0 11V9Q0 0 9 0h23q9 0 9 9v2z" fill="#f9c945" stroke="none"/><path d="M0 11.500h41" stroke="#c8c4b8" stroke-dasharray="1 1"/><path d="M0 20.500h41M0 30h41" stroke="#d4d2cf" stroke-width=".700"/>`)}
      ${this.app(svg`${this.tile("#fff")}<circle cx="21.500" cy="11" r="4.300" fill="#7b83eb" stroke="none"/><circle cx="30" cy="12.500" r="3.200" fill="#5059c9" stroke="none"/><path d="M26 17.500h9v9q-1 6-7.500 4z" fill="#5059c9" stroke="none"/><path d="M16 17.500h12v11q-1 6-6.500 6t-6.500-6z" fill="#7b83eb" stroke="none"/><rect x="5.500" y="13" width="15" height="16" rx="1" fill="#464eb8" stroke="none"/><text x="13" y="25" text-anchor="middle" font-family="Open Sans, sans-serif" font-weight="700" font-size="11" fill="#fff" stroke="none">T</text>`)}
      ${this.app(svg`${this.tile("#fff")}<path d="M27.500 6.500 34.500 10v22l-7 3.500z" fill="#3ba0ea" stroke="none"/><path d="M27.500 6.500v8.500L8.500 28.500 5.500 25.500z" fill="#2567ac" stroke="none"/><path d="M27.500 35.500V27L8.500 13.500 5.500 16.500z" fill="#2f80c8" stroke="none"/>`, true)}
      ${this.app(svg`${this.tile("#fff")}<rect x="11" y="7" width="24" height="27" rx="1.500" fill="#2f9a5c" stroke="none"/><path d="M23 7h12v9H23z" fill="#56c28a" stroke="none"/><path d="M11 16h12v9H11z" fill="#1f6b3e" stroke="none"/><path d="M11 25h24v9H11z" fill="#27593d" stroke="none"/><path d="M23 16h12v9H23z" fill="#3aa56b" stroke="none"/><rect x="4" y="13" width="15" height="16" rx="1" fill="#1c7040" stroke="none"/><text x="11.500" y="25" text-anchor="middle" font-family="Open Sans, sans-serif" font-weight="700" font-size="11" fill="#fff" stroke="none">X</text>`, true)}
      <div class="tray">
        <i class="rule"></i>
        <span class="thumb">${ic(47, 31, svg`<rect width="47" height="30" fill="#08090a" stroke="none"/><rect x="12" y="1.500" width="22" height="12" fill="#4b3a8c" stroke="none"/><rect x="12" y="13" width="22" height="16" fill="#141520" stroke="none"/><rect x="14.500" y="4" width="6" height="6" fill="#8368c4" stroke="none"/><circle cx="17.500" cy="7" r="1.500" fill="#fff" stroke="none"/><path d="M23 5.500h6M23 8h6" stroke="#fff"/><path d="M2 3h5M2 6h3M2 9h4M2 12h5M2 15h3M2 18h4M37 6h7M37 10h6M37 14h7" stroke="#4e4e58" stroke-width=".800"/><path d="M15 15h5" stroke="#5fcf6a" stroke-width="1.500"/><path d="M16 20h8M16 23h8M16 26h8" stroke="#c0998d" stroke-width=".900"/><path d="M0 31h36" stroke="#4bb85c" stroke-width="1.500"/><g transform="translate(31 22.500) scale(.39)">${spot("#14301a")}</g>`)}</span>
        <span class="thumb">${ic(47, 31, svg`<rect y="3" width="47" height="27" fill="#111216" stroke="none"/><rect y="3" width="47" height="4" fill="#2e2b3e" stroke="none"/><rect x="9" y="9" width="12" height="7" fill="#c2643a" stroke="none"/><rect x="12" y="10" width="4" height="6" fill="#e8c84a" stroke="none"/><rect x="9" y="17" width="12" height="6" fill="#2c4d8f" stroke="none"/><rect x="14" y="17" width="3" height="6" fill="#c9463d" stroke="none"/><circle cx="15" cy="26" r="2.500" fill="#eee" stroke="none"/><path d="M22 10h12M22 14h16M22 17h10M22 20h14M2 10h3M2 14h3" stroke="#55565e" stroke-width=".900"/><g transform="translate(30.500 22.500) scale(.39)">${flame}</g>`)}</span>
        <span class="trash">${ic(37, 48, svg`<defs><linearGradient id="tr"><stop stop-color="#858789"/><stop offset=".300" stop-color="#b5b7b8"/><stop offset=".600" stop-color="#8a8c8e"/><stop offset="1" stop-color="#a4a6a7"/></linearGradient></defs>
          <path d="M2 8 7 2l5 1 4-2.500 6 1L28 2l4 4 2 3z" fill="#d8dadb" stroke="none"/>${bits.map((f, i) => svg`<path d="M${4 + i * 3.5} ${i % 2 ? 3 : 5}l4-1.500 2 4-4 2z" fill=${f} stroke="#555" stroke-width=".400"/>`)}
          <path d="M.500 7Q18 11.500 36 7L31.500 43q-1 4-13.500 4T5.500 43z" fill="url(#tr)" opacity=".900" stroke="#c2c4c5" stroke-width=".600"/><path d="M8 12l3 31M28.500 12l-2.500 31" stroke="#cfd1d2" stroke-width="1.500" opacity=".300"/>`)}</span>
      </div>`;
  }
}

@customElement("app-root")
export class AppRoot extends LitElement {
  static styles = css`
    * { box-sizing: border-box; }
    :host { display: flex; flex-direction: column; width: 1147px; height: 720px; overflow: hidden; background: radial-gradient(circle at 75% 110%, #17100f, transparent 25%), linear-gradient(90deg, #060708, #030303); }
    .stage { display: flex; height: 632px; background: linear-gradient(#2a2a2c 0 22px, #1b1b1c 22px 610px, #0b62a8 610px); padding-left: 1px; flex: none; }
    .window { width: 1131px; height: 632px; overflow: hidden; border-radius: 8px; box-shadow: 0 0 0 1px #111; flex: none; background: #303030; }
    .side { display: flex; flex-direction: column; width: 15px; height: 632px; align-items: flex-end; justify-content: space-between; }
    .bars { width: 8px; height: 47px; margin-top: 77px; background: linear-gradient(#1b1b1c 0 9px, #444 9px 29px, #1a3d60 29px 30px, #1b1b1c 30px 33px, #3a3a3a 33px); }
    .bell { width: 8px; height: 16px; margin: 0 7px 4px 0; }
    .hair { height: 2px; background: linear-gradient(#242424 1px, #c9c9c9 1px); }
  `;
  render() {
    return html`<menu-bar></menu-bar>
      <div class="stage">
        <div class="window">
          <excel-ribbon></excel-ribbon>
          <div class="hair"></div>
          <work-sheet></work-sheet>
          <excel-footer></excel-footer>
        </div>
        <div class="side"><i class="bars"></i><svg class="bell" viewBox="0 0 8 16"><path d="M-3 11.500Q-1 10 0 5.500 2 3 4 5.500 4.500 10 6 11.500z" fill="none" stroke="#8fb9dd"/></svg></div>
      </div>
      <mac-dock></mac-dock>`;
  }
}
